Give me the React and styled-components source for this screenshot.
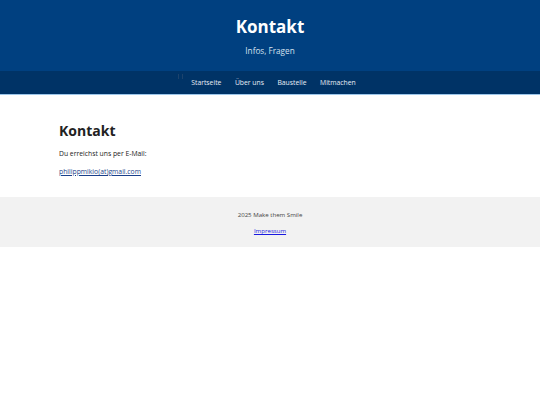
import React from "react";
import styled, { createGlobalStyle } from "styled-components";

const Global = createGlobalStyle`
  html, body { margin: 0; padding: 0; background: #ffffff; }
  body { font-family: "Open Sans", "Noto Sans", sans-serif; color: #222; }
`;

const Header = styled.header`
  background: #004080;
  color: #fff;
  text-align: center;
  padding: 16px 0 0;
`;

const Title = styled.h1`
  margin: 0;
  font-size: 17px;
  line-height: 22px;
  font-weight: 700;
`;

const Subtitle = styled.p`
  margin: 7px 0 0;
  font-size: 8.2px;
  line-height: 11px;
  color: #d6e0ee;
`;

const Nav = styled.nav`
  margin-top: 15px;
  background: #003366;
  border-bottom: 1px solid #9cc6ea;
  height: 23px;
  display: flex;
  justify-content: center;
  align-items: center;
`;

const NavList = styled.ul`
  list-style: none;
  margin: 0;
  padding: 0 0 0 7px;
  display: flex;
  gap: 13.5px;
  position: relative;
`;

const Marker = styled.span`
  position: absolute;
  left: -6px;
  top: -4px;
  width: 3px;
  height: 5px;
  border-right: 1px solid #24476f;
  border-left: 1px solid #24476f;
  opacity: 0.8;
`;

const NavItem = styled.li`
  font-size: 6.8px;
  line-height: 10px;
  color: #e8eef6;
`;

const Main = styled.main`
  padding: 26px 59px 20px;
`;

const H2 = styled.h2`
  margin: 0;
  font-size: 14px;
  line-height: 20px;
  font-weight: 700;
  color: #222;
`;

const P = styled.p`
  margin: 8px 0 0;
  font-size: 6.8px;
  line-height: 10px;
  color: #222;
`;

const Link = styled.a`
  color: #1a3f8a;
  text-decoration: underline;
`;

const Footer = styled.footer`
  background: #f2f2f2;
  text-align: center;
  padding: 13px 0 11px;
`;

const FootText = styled.p`
  margin: 0;
  font-size: 6.1px;
  line-height: 10px;
  color: #444;
`;

const FootLinkRow = styled.p`
  margin: 6px 0 0;
  font-size: 6.1px;
  line-height: 10px;
`;

const FootLink = styled.a`
  color: #1a1ae0;
  text-decoration: underline;
`;

export default function App() {
  return (
    <>
      <Global />
      <Header>
        <Title>Kontakt</Title>
        <Subtitle>Infos, Fragen</Subtitle>
        <Nav>
          <NavList>
            <Marker />
            <NavItem>Startseite</NavItem>
            <NavItem>Über uns</NavItem>
            <NavItem>Baustelle</NavItem>
            <NavItem>Mitmachen</NavItem>
          </NavList>
        </Nav>
      </Header>
      <Main>
        <H2>Kontakt</H2>
        <P>Du erreichst uns per E-Mail:</P>
        <P>
          <Link href="#">philippmikio(at)gmail.com</Link>
        </P>
      </Main>
      <Footer>
        <FootText>2025 Make them Smile</FootText>
        <FootLinkRow>
          <FootLink href="#">Impressum</FootLink>
        </FootLinkRow>
      </Footer>
    </>
  );
}
